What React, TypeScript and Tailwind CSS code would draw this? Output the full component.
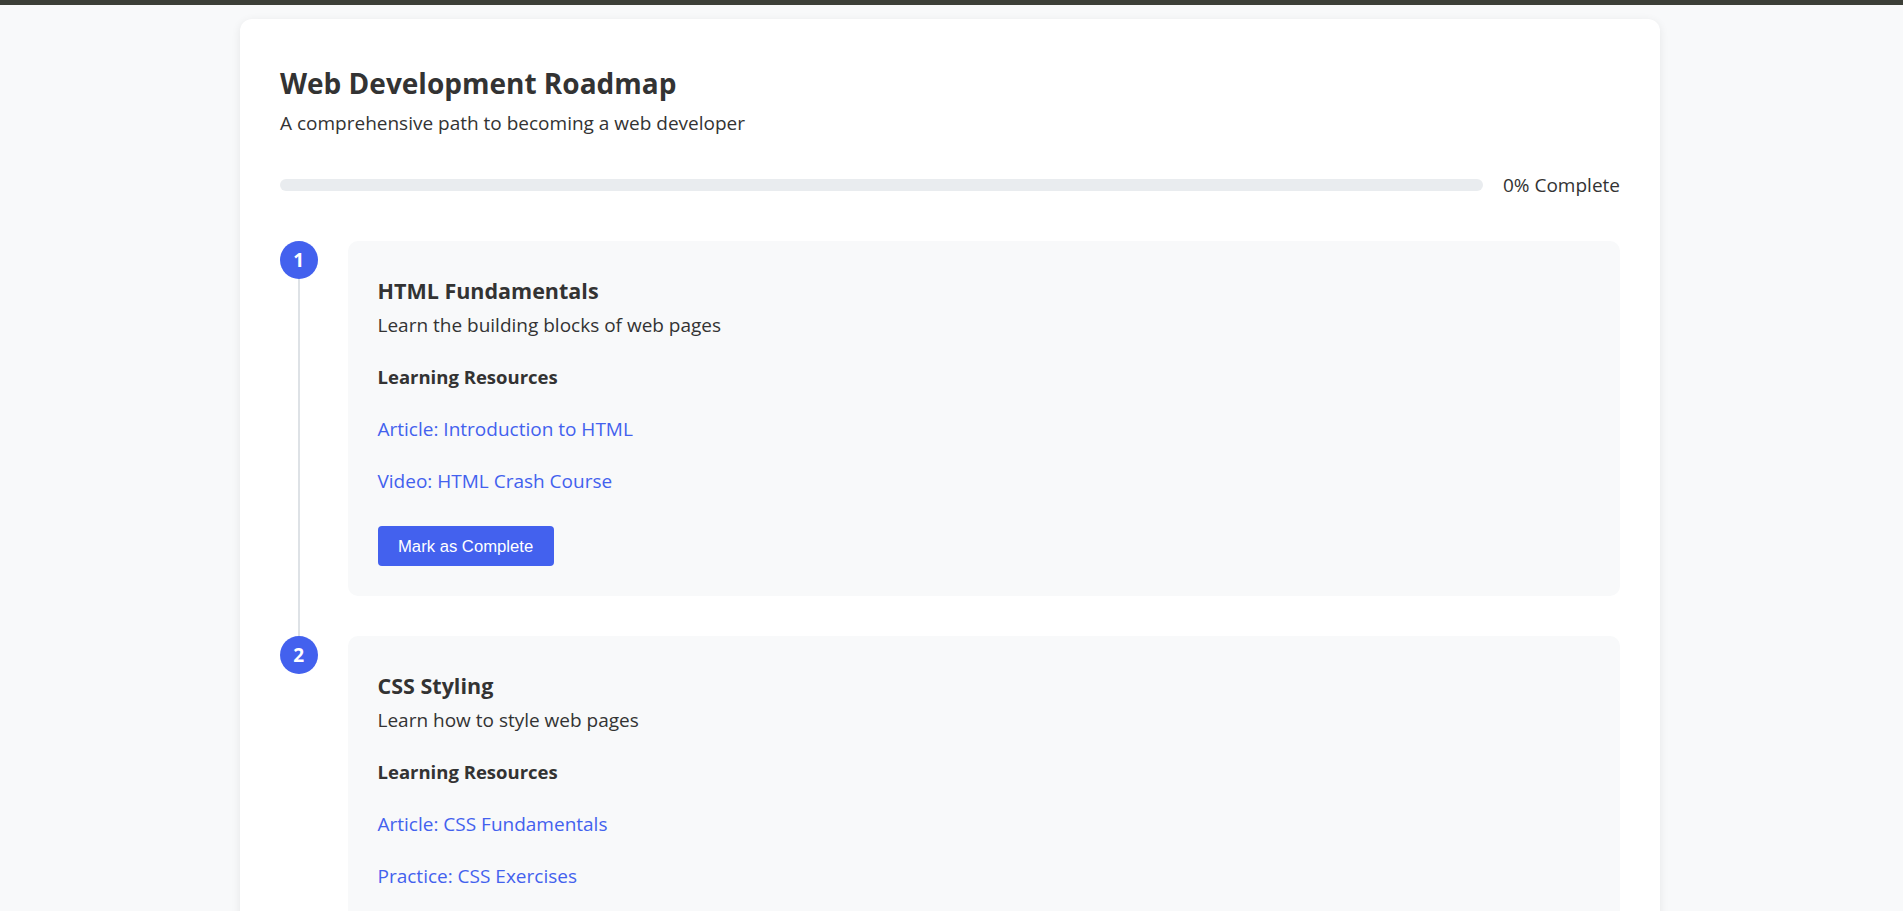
import React from 'react';

interface Resource {
  label: string;
}

interface Step {
  title: string;
  description: string;
  resources: Resource[];
}

const steps: Step[] = [
  {
    title: 'HTML Fundamentals',
    description: 'Learn the building blocks of web pages',
    resources: [{ label: 'Article: Introduction to HTML' }, { label: 'Video: HTML Crash Course' }],
  },
  {
    title: 'CSS Styling',
    description: 'Learn how to style web pages',
    resources: [{ label: 'Article: CSS Fundamentals' }, { label: 'Practice: CSS Exercises' }],
  },
];

const StepItem: React.FC<{ step: Step; index: number; last: boolean }> = ({ step, index, last }) => {
  return (
    <div className="relative mb-[40px] pl-[67.5px]">
      {/* Number + connector line */}
      <div className="absolute left-0 top-0 flex h-[37.5px] w-[37.5px] items-center justify-center rounded-full bg-[#4361ee] text-[19px] font-bold text-white">
        {index + 1}
      </div>
      {!last && (
        <div className="absolute left-[17.5px] top-[37.5px] bottom-[-41px] w-[2.5px] bg-[#dee2e6]" />
      )}

      <div className="rounded-[10px] bg-[#f8f9fa] p-[30px]">
        <h3 className="text-[21.5px] font-bold leading-[40px] text-[#333]">{step.title}</h3>
        <p className="text-[19px] leading-[28px] text-[#333]">{step.description}</p>

        <h4 className="mt-[24px] text-[18.5px] font-bold leading-[28px] text-[#333]">Learning Resources</h4>
        <div className="flex flex-col gap-[24px] pt-[24px]">
          {step.resources.map((r) => (
            <a key={r.label} href="#" className="text-[19px] leading-[28px] text-[#4361ee]">
              {r.label}
            </a>
          ))}
        </div>

        <button className="mt-[31px] h-[40px] rounded-[4px] bg-[#4361ee] px-[20.5px] font-['Liberation_Sans',Arial,sans-serif] text-[16.67px] text-white">
          Mark as Complete
        </button>
      </div>
    </div>
  );
};

const App: React.FC = () => {
  return (
    <div className="min-h-screen bg-[#f8f9fa] font-['Open_Sans',sans-serif] text-[#333]">
      {/* Top strip */}
      <div className="h-[5px] bg-[#3c3f37]" />

      <div className="px-[240px] pt-[14px] pb-[20px]">
        <div className="w-full max-w-[1420px] rounded-[12px] bg-white px-[40px] pt-[40px] pb-[40px] shadow-[0_2px_10px_rgba(0,0,0,0.08)]">
          {/* Header */}
          <h1 className="text-[28px] font-bold leading-[48px] text-[#333]">Web Development Roadmap</h1>
          <p className="mt-[2px] text-[19px] leading-[28px] text-[#333]">A comprehensive path to becoming a web developer</p>

          {/* Progress */}
          <div className="mt-[34px] flex items-center gap-[20px]">
            <div className="h-[12px] flex-1 rounded-full bg-[#e9ecef]" />
            <span className="text-[19px] leading-[28px] text-[#333]">0% Complete</span>
          </div>

          {/* Steps */}
          <div className="mt-[42px]">
            {steps.map((s, i) => (
              <StepItem key={s.title} step={s} index={i} last={i === steps.length - 1} />
            ))}
          </div>
        </div>
      </div>
    </div>
  );
};

export default App;
